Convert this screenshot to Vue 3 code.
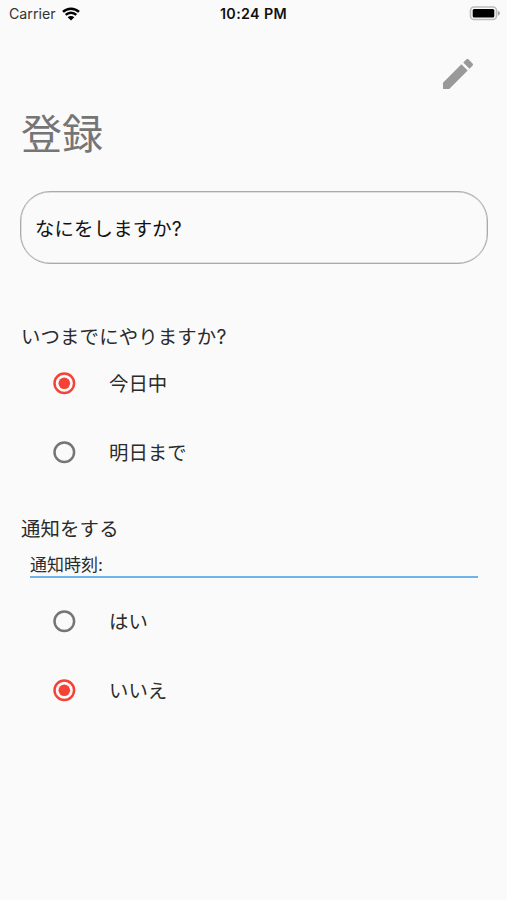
<script setup>
import { ref } from 'vue'

const deadline = ref('today')
const notify = ref('no')

const deadlines = [
  { value: 'today', label: '今日中' },
  { value: 'tomorrow', label: '明日まで' },
]
const notifications = [
  { value: 'yes', label: 'はい' },
  { value: 'no', label: 'いいえ' },
]
</script>

<template>
  <div class="screen">
    <header class="status">
      <div class="carrier">
        <span class="carrier-name">Carrier</span>
        <svg class="wifi" viewBox="0 0 18 14">
          <path d="M1 4.9 A11.6 11.6 0 0 1 17 4.9" />
          <path d="M3.7 7.8 A7.6 7.6 0 0 1 14.3 7.8" />
          <path class="fill" d="M9 13.6 L5.7 10.3 A4.7 4.7 0 0 1 12.3 10.3 Z" />
        </svg>
      </div>
      <span class="time">10:24 PM</span>
      <div class="power">
        <svg class="battery" viewBox="0 0 32 15">
          <rect x="1.5" y="1" width="26" height="12.5" rx="3.5" fill="#fafafa" stroke="#bcbcbc" stroke-width="1.6" />
          <rect x="3.7" y="3" width="21.6" height="8.6" rx="1.5" fill="#000" />
          <path d="M28.8 4.8 Q31 5.6 31 7.3 Q31 9 28.8 9.8 Z" fill="#a8a8a8" />
        </svg>
      </div>
    </header>

    <div class="toolbar">
      <svg class="edit" viewBox="0 0 24 24">
        <path d="M3 17.25V21h3.75L17.81 9.94l-3.75-3.75L3 17.25zM20.71 7.04c.39-.39.39-1.02 0-1.41l-2.34-2.34c-.39-.39-1.02-.39-1.41 0l-1.83 1.83 3.75 3.75 1.83-1.83z" />
      </svg>
    </div>

    <h1 class="title">登録</h1>
    <div class="task">なにをしますか?</div>

    <section class="deadline">
      <h2 class="question">いつまでにやりますか?</h2>
      <div v-for="o in deadlines" :key="o.value" class="option" @click="deadline = o.value">
        <svg class="radio" :class="{ on: deadline === o.value }" viewBox="0 0 24 24">
          <circle class="ring" cx="12.3" cy="12.3" r="9.8" />
          <circle v-if="deadline === o.value" class="dot" cx="12.3" cy="12.3" r="5.8" />
        </svg>
        <span class="label">{{ o.label }}</span>
      </div>
    </section>

    <section class="notice">
      <h2 class="question">通知をする</h2>
      <div class="clock">通知時刻:</div>
      <div v-for="o in notifications" :key="o.value" class="option" @click="notify = o.value">
        <svg class="radio" :class="{ on: notify === o.value }" viewBox="0 0 24 24">
          <circle class="ring" cx="12.3" cy="12.3" r="9.8" />
          <circle v-if="notify === o.value" class="dot" cx="12.3" cy="12.3" r="5.8" />
        </svg>
        <span class="label">{{ o.label }}</span>
      </div>
    </section>
  </div>
</template>

<style>
body {
  margin: 0;
  background: #fafafa;
}
</style>

<style scoped>
.screen {
  box-sizing: border-box;
  height: 900px;
  overflow: hidden;
  background: #fafafa;
  color: #2b2b2b;
  font-family: Inter, "Noto Sans CJK JP", sans-serif;
}
.status {
  display: grid;
  grid-template-columns: 1fr auto 1fr;
  align-items: center;
  height: 27px;
  padding: 0 6px 0 9px;
}
.carrier {
  display: flex;
  align-items: center;
  gap: 6px;
}
.carrier-name {
  font-size: 14.2px;
  color: #333;
}
.wifi {
  width: 18px;
  height: 14px;
  fill: none;
  stroke: #000;
  stroke-width: 2.5;
}
.wifi .fill {
  fill: #000;
  stroke: none;
}
.time {
  margin-right: 3px;
  font-size: 14.3px;
  letter-spacing: 0.35px;
  font-weight: 600;
  color: #111;
}
.power {
  display: flex;
  justify-content: flex-end;
}
.battery {
  width: 32px;
  height: 15px;
}
.toolbar {
  display: flex;
  justify-content: flex-end;
  padding: 27px 29px 0 0;
}
.edit {
  width: 40px;
  height: 40px;
  fill: #999;
}
.title {
  margin: 10px 0 0 21px;
  font-size: 41px;
  line-height: 60px;
  font-weight: 400;
  color: #757575;
}
.task {
  box-sizing: border-box;
  height: 73px;
  margin: 27px 19px 0 20px;
  padding-left: 14px;
  border: 1px solid #aaa;
  border-radius: 30px;
  box-shadow: inset 0 0 0 0.5px #c4c4c4;
  font-size: 19.4px;
  letter-spacing: 0.15px;
  line-height: 74px;
  color: #111;
}
.deadline {
  margin-top: 59px;
}
.notice {
  margin-top: 29px;
}
.question {
  margin: 0 0 0 21px;
  font-size: 19.4px;
  letter-spacing: 0.15px;
  line-height: 28px;
  font-weight: 400;
}
.question + .option {
  margin-top: -2px;
}
.option {
  display: flex;
  align-items: center;
  gap: 33px;
  height: 68.5px;
  padding-left: 52px;
  font-size: 19.4px;
  line-height: 28px;
}
.label {
  padding-top: 2px;
}
.radio {
  width: 24px;
  height: 24px;
}
.ring {
  fill: none;
  stroke: #757575;
  stroke-width: 2.5;
}
.on .ring {
  stroke: #f44336;
}
.dot {
  fill: #f44336;
}
.clock {
  box-sizing: border-box;
  height: 29px;
  margin: 6px 29px 9px 30px;
  padding-top: 4px;
  border-bottom: 2px solid #6bb5ec;
  font-size: 17px;
  line-height: 24px;
}
</style>
